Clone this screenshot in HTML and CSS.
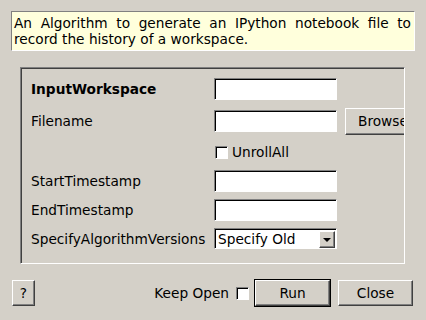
FILE: index.html
```html
<!DOCTYPE html>
<html lang="en">
<head>
  <meta charset="UTF-8">
  <meta name="viewport" content="width=device-width, initial-scale=1.0">
  <title>GeneratePythonScript</title>
  <link rel="stylesheet" href="styles.css">
</head>
<body>
  <div class="dialog">
    <div class="description">
      <p>An Algorithm to generate an IPython notebook file to record the history of a workspace.</p>
    </div>

    <div class="props-frame">
      <div class="props-grid">
        <div class="label mandatory">InputWorkspace</div>
        <div class="field text-box"></div>
        <div class="spare"></div>

        <div class="label">Filename</div>
        <div class="field text-box"></div>
        <button class="btn browse-btn">Browse</button>

        <div class="spare"></div>
        <label class="check-row">
          <span class="check-box"></span>
          <span>UnrollAll</span>
        </label>

        <div class="label">StartTimestamp</div>
        <div class="field text-box"></div>
        <div class="spare"></div>

        <div class="label">EndTimestamp</div>
        <div class="field text-box"></div>
        <div class="spare"></div>

        <div class="label">SpecifyAlgorithmVersions</div>
        <div class="field combo">
          <span class="combo-text">Specify Old</span>
          <span class="combo-arrow"><span class="arrow-down"></span></span>
        </div>
        <div class="spare"></div>
      </div>
    </div>

    <div class="button-row">
      <button class="btn help-btn">?</button>
      <div class="spacer"></div>
      <label class="keep-open">
        <span>Keep Open</span>
        <span class="check-box"></span>
      </label>
      <button class="btn run-btn">Run</button>
      <button class="btn close-btn">Close</button>
    </div>
  </div>
</body>
</html>
```

FILE: styles.css
```css
html, body {
  margin: 0;
  padding: 0;
}

body {
  width: 426px;
  height: 320px;
  background-color: #d4d0c8;
  font-family: "DejaVu Sans", "Liberation Sans", sans-serif;
  font-size: 13.7px;
  color: #000;
  overflow: hidden;
}

.dialog {
  padding-top: 11px;
}

.description {
  margin: 0 11px 0 11px;
  height: 38px;
  padding: 0 3px 0 2px;
  background-color: #ffffdc;
  border-top: 1px solid #808080;
  border-left: 1px solid #808080;
  border-right: 1px solid #ffffff;
  border-bottom: 1px solid #ffffff;
}

.description p {
  margin: 0;
  padding-top: 3px;
  line-height: 16px;
  text-align: justify;
}

/* sunken group frame that holds the properties */
.props-frame {
  margin: 16px 21px 0 20px;
  height: 195px;
  border-top: 1px solid #808080;
  border-left: 1px solid #808080;
  border-right: 1px solid #ffffff;
  border-bottom: 1px solid #ffffff;
  box-shadow: inset 1px 1px 0 #404040;
  overflow: hidden;
}

.props-grid {
  display: grid;
  grid-template-columns: 175px 123px 75px;
  grid-template-rows: 22px 27px 22px 22px 22px 21px;
  column-gap: 8px;
  row-gap: 7px;
  align-items: center;
  padding: 10px 0 0 10px;
}

.label {
  white-space: nowrap;
}

.mandatory {
  font-weight: bold;
}

.field {
  box-sizing: border-box;
  height: 22px;
  background-color: #fff;
  border-top: 1px solid #808080;
  border-left: 1px solid #808080;
  border-right: 1px solid #ffffff;
  border-bottom: 1px solid #ffffff;
  box-shadow: inset 1px 1px 0 #000;
}

.combo {
  height: 21px;
  display: flex;
  align-items: center;
  justify-content: space-between;
  padding: 0 1px 0 3px;
}

.combo-text {
  padding-top: 1px;
}

.combo-arrow {
  box-sizing: border-box;
  width: 16px;
  height: 17px;
  margin-top: 1px;
  display: flex;
  align-items: center;
  justify-content: center;
  background-color: #d4d0c8;
  border-top: 1px solid #ffffff;
  border-left: 1px solid #ffffff;
  border-right: 1px solid #404040;
  border-bottom: 1px solid #404040;
  box-shadow: inset -1px -1px 0 #808080;
}

.arrow-down {
  width: 0;
  height: 0;
  border-left: 4px solid transparent;
  border-right: 4px solid transparent;
  border-top: 4px solid #000;
  margin-top: 1px;
}

.check-row {
  grid-column: 2 / 4;
  display: flex;
  align-items: center;
  gap: 4px;
  padding-left: 1px;
}

.check-box {
  box-sizing: border-box;
  display: inline-block;
  width: 13px;
  height: 13px;
  background-color: #fff;
  border-top: 1px solid #808080;
  border-left: 1px solid #808080;
  border-right: 1px solid #ffffff;
  border-bottom: 1px solid #ffffff;
  box-shadow: inset 1px 1px 0 #000;
}

.btn {
  box-sizing: border-box;
  padding: 0;
  font-family: inherit;
  font-size: 13.7px;
  color: #000;
  background-color: #d4d0c8;
  border-top: 1px solid #ffffff;
  border-left: 1px solid #ffffff;
  border-right: 1px solid #404040;
  border-bottom: 1px solid #404040;
  box-shadow: inset -1px -1px 0 #808080;
  text-align: center;
}

.browse-btn {
  width: 75px;
  height: 27px;
  margin-top: 1px;
  text-align: left;
  padding-left: 12px;
}

.button-row {
  display: flex;
  align-items: center;
  height: 28px;
  margin-top: 15px;
  padding: 0 13px 0 12px;
}

.help-btn {
  width: 23px;
  height: 26px;
}

.spacer {
  flex: 1;
}

.keep-open {
  display: flex;
  align-items: center;
  gap: 7px;
  margin-right: 5px;
}

.run-btn {
  width: 77px;
  height: 28px;
  outline: 1px solid #000;
  outline-offset: -1px;
  border-top: 2px solid #ffffff;
  border-left: 2px solid #ffffff;
  border-right: 2px solid #404040;
  border-bottom: 2px solid #404040;
  margin-right: 7px;
}

.close-btn {
  width: 75px;
  height: 26px;
}
```
